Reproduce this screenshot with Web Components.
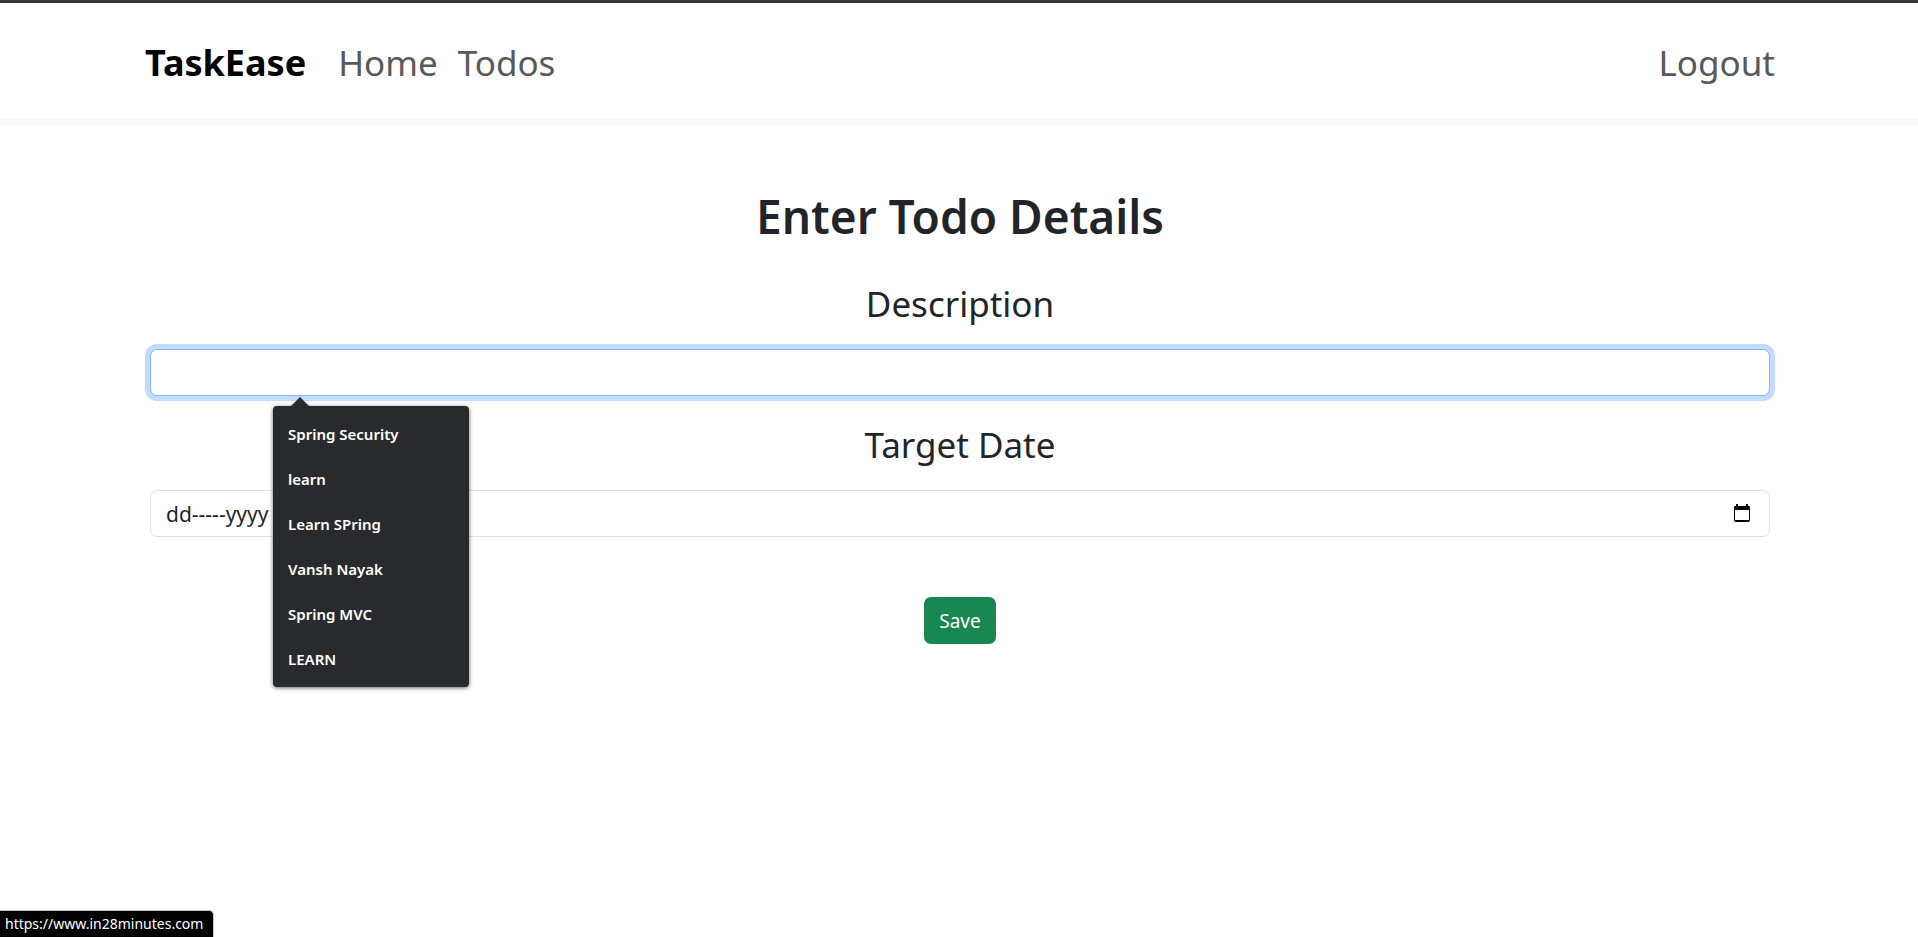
<!DOCTYPE html>
<html lang="en">
<head>
<meta charset="utf-8">
<meta name="viewport" content="width=device-width, initial-scale=1">
<title>TaskEase</title>
<style>
  body {
    margin: 0;
    background: #fff;
    color: #212529;
    font-family: "Noto Sans", "Open Sans", sans-serif;
    font-size: 20px;
  }
</style>
</head>
<body>
<task-app></task-app>

<template id="task-app">
  <style>
    :host { display: block; }
    main { display: block; }
  </style>
  <task-nav>
    <nav-link slot="start" href="#home">Home</nav-link>
    <nav-link slot="start" href="#todos">Todos</nav-link>
    <nav-link slot="end" href="#logout">Logout</nav-link>
  </task-nav>
  <main><todo-form></todo-form></main>
  <link-status>https://www.in28minutes.com</link-status>
</template>

<template id="task-nav">
  <style>
    :host {
      display: block;
      border-top: 3px solid #3b3939;
      border-bottom: 6px solid #f8f9fa;
    }
    nav {
      display: flex;
      align-items: center;
      gap: 32px;
      box-sizing: border-box;
      max-width: 1632px;
      min-height: 116px;
      margin: 0 auto;
      padding: 2px 0 0 2px;
    }
    .brand {
      color: #000;
      font-size: 36px;
      font-weight: 700;
      text-decoration: none;
    }
    .group { display: flex; gap: 20px; }
    .end { margin-left: auto; }
  </style>
  <nav>
    <a class="brand" href="#">TaskEase</a>
    <div class="group"><slot name="start"></slot></div>
    <div class="group end"><slot name="end"></slot></div>
  </nav>
</template>

<template id="nav-link">
  <style>
    :host { display: block; }
    a { color: #595959; font-size: 35px; text-decoration: none; }
  </style>
  <a><slot></slot></a>
</template>

<template id="todo-form">
  <style>
    :host { display: block; max-width: 1620px; margin: 0 auto; padding: 60px 0 60px 2px; }
    h1 {
      margin: 0 0 28px;
      font-size: 46px;
      font-weight: 600;
      line-height: 62px;
      text-align: center;
    }
    form { display: flex; flex-direction: column; gap: 20px; }
    save-button { align-self: center; margin-top: 40px; }
  </style>
  <h1>Enter Todo Details</h1>
  <form>
    <todo-field label="Description" name="description" focused>
      <suggestion-list>
        <suggestion-item>Spring Security</suggestion-item>
        <suggestion-item>learn</suggestion-item>
        <suggestion-item>Learn SPring</suggestion-item>
        <suggestion-item>Vansh Nayak</suggestion-item>
        <suggestion-item>Spring MVC</suggestion-item>
        <suggestion-item>LEARN</suggestion-item>
      </suggestion-list>
    </todo-field>
    <todo-field label="Target Date" name="targetDate" value="dd-----yyyy">
      <date-picker-button slot="action"></date-picker-button>
    </todo-field>
    <save-button>Save</save-button>
  </form>
</template>

<template id="todo-field">
  <style>
    :host { display: flex; flex-direction: column; gap: 16px; position: relative; }
    label { font-size: 35px; line-height: 58px; text-align: center; }
    .control {
      display: flex;
      align-items: center;
      box-sizing: border-box;
      min-height: 47px;
      padding: 0 15px;
      border: 1px solid #dee2e6;
      border-radius: 7px;
      background: #fff;
    }
    :host([focused]) .control {
      border-color: #86b7fe;
      box-shadow: 0 0 0 5px #c2dbfe;
    }
    input {
      flex: 1;
      min-width: 0;
      padding: 0;
      border: 0;
      outline: 0;
      background: none;
      color: inherit;
      font: inherit;
      font-size: 21px;
      line-height: 30px;
    }
  </style>
  <label for="input"></label>
  <div class="control">
    <input id="input" type="text" autocomplete="off">
    <slot name="action"></slot>
  </div>
  <slot></slot>
</template>

<template id="date-picker-button">
  <style>
    :host { display: flex; margin-right: 2px; }
    button { display: flex; padding: 0 0 2px; border: 0; background: none; cursor: pointer; }
    svg { display: block; }
  </style>
  <button type="button" aria-label="Show date picker">
    <svg width="20" height="20" viewBox="0 0 20 20">
      <path d="M4 1h2v2h8V1h2v2h1q1 0 1 1v13q0 2-2 2H4q-2 0-2-2V4q0-1 1-1h1z" fill="#000"/>
      <path d="M3 7h14v10H3z" fill="#fff"/>
    </svg>
  </button>
</template>

<template id="suggestion-list">
  <style>
    :host {
      position: absolute;
      z-index: 1;
      top: 100%;
      left: 123px;
      box-sizing: border-box;
      width: 196px;
      margin-top: 10px;
      padding: 6px 0 5px;
      border-radius: 4px;
      background: #292a2d;
      box-shadow: 0 1px 4px rgba(0, 0, 0, .6);
      color: #fff;
      font-size: 15px;
      font-weight: 600;
    }
    svg { position: absolute; top: -9px; left: 18px; }
  </style>
  <svg width="18" height="9" viewBox="0 0 18 9" aria-hidden="true"><path d="M0 9 9 0l9 9z" fill="#292a2d"/></svg>
  <slot></slot>
</template>

<template id="suggestion-item">
  <style>
    :host { display: block; padding: 0 15px; line-height: 45px; white-space: nowrap; }
  </style>
  <slot></slot>
</template>

<template id="save-button">
  <style>
    :host { display: block; }
    button {
      display: block;
      min-height: 47px;
      padding: 8px 15px;
      border: 0;
      border-radius: 7px;
      background: #198754;
      color: #fff;
      font: inherit;
      font-size: 19px;
      cursor: pointer;
    }
  </style>
  <button type="submit"><slot></slot></button>
</template>

<template id="link-status">
  <style>
    :host {
      position: fixed;
      bottom: 0;
      left: 0;
      box-sizing: border-box;
      padding: 0 10px 0 5px;
      border-top: 1px solid #c8c8c8;
      border-right: 1px solid #c8c8c8;
      border-top-right-radius: 5px;
      background: #000;
      color: #fff;
      font-size: 14px;
      line-height: 26px;
    }
  </style>
  <slot></slot>
</template>

<script>
  class TemplateElement extends HTMLElement {
    constructor() {
      super();
      const template = document.getElementById(this.localName);
      this.attachShadow({ mode: "open" }).append(template.content.cloneNode(true));
    }
  }

  class NavLink extends TemplateElement {
    connectedCallback() {
      this.shadowRoot.querySelector("a").href = this.getAttribute("href");
    }
  }

  class TodoField extends TemplateElement {
    connectedCallback() {
      const input = this.shadowRoot.querySelector("input");
      this.shadowRoot.querySelector("label").textContent = this.getAttribute("label");
      input.name = this.getAttribute("name");
      input.value = this.getAttribute("value") || "";
    }
  }

  customElements.define("nav-link", NavLink);
  customElements.define("task-nav", class extends TemplateElement {});
  customElements.define("date-picker-button", class extends TemplateElement {});
  customElements.define("suggestion-item", class extends TemplateElement {});
  customElements.define("suggestion-list", class extends TemplateElement {});
  customElements.define("todo-field", TodoField);
  customElements.define("save-button", class extends TemplateElement {});
  customElements.define("todo-form", class extends TemplateElement {});
  customElements.define("link-status", class extends TemplateElement {});
  customElements.define("task-app", class extends TemplateElement {});
</script>
</body>
</html>
